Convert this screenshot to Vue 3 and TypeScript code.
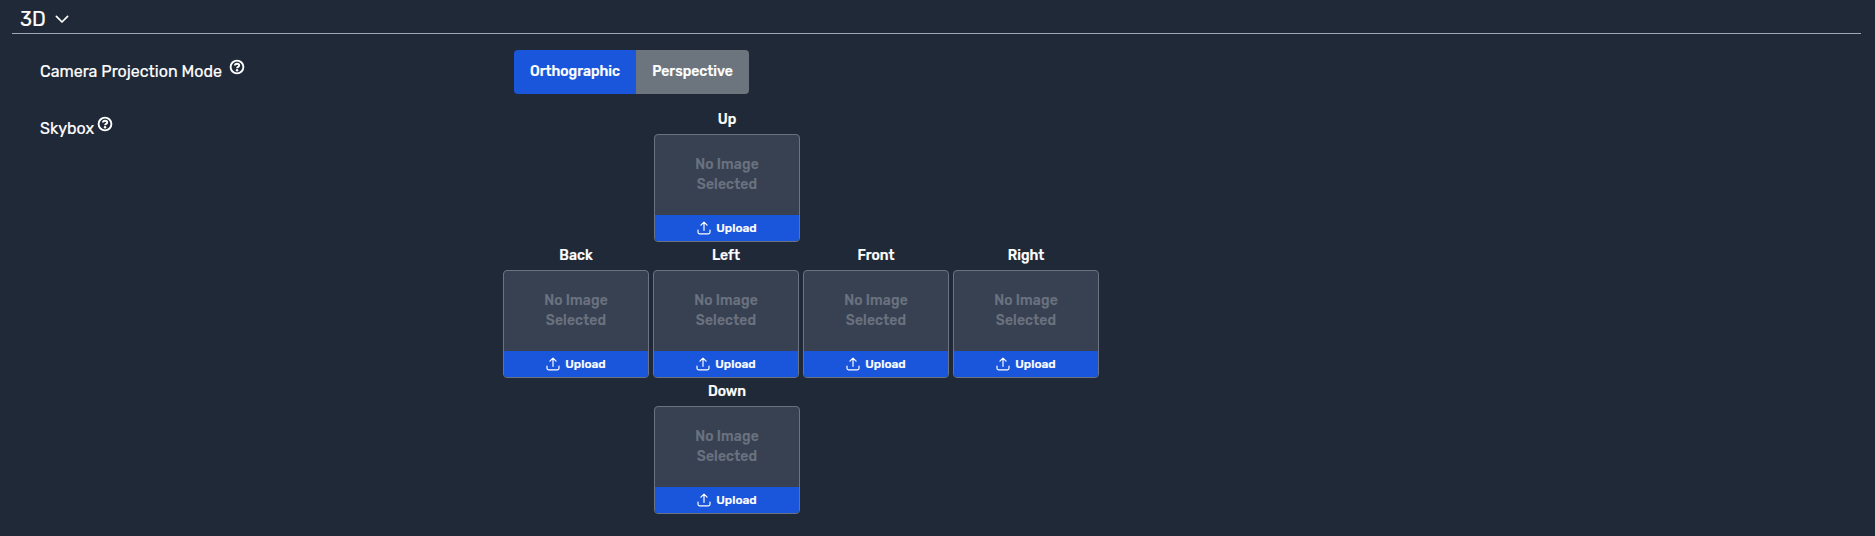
<script setup lang="ts">
import { ref } from 'vue'

const modes = ['Orthographic', 'Perspective']
const mode = ref('Orthographic')
const open = ref(true)
const rows: string[][] = [['Up'], ['Back', 'Left', 'Front', 'Right'], ['Down']]
</script>

<template>
  <main class="panel">
    <header class="section-head" @click="open = !open">
      <span class="section-title">3D</span>
      <svg class="chevron" width="14" height="9" viewBox="0 0 14 9"><path d="M1.400 1.400 7 7l5.600-5.600" /></svg>
    </header>
    <div v-if="open" class="body">
      <div class="setting">
        <div class="name">
          <span class="camera-name">Camera Projection Mode</span>
          <svg class="help wide" width="16" height="16" viewBox="0 0 16 16"><circle cx="8" cy="8" r="6.400" /><path d="M5.900 6.500C6 5.200 6.900 4.700 8.100 4.700c1.200 0 2.100.7 2.100 1.700 0 1.500-2.100 1.400-2.100 2.900" /><circle class="dot" cx="8.050" cy="11.300" r="1.200" /></svg>
        </div>
        <div class="toggle">
          <button v-for="m in modes" :key="m" :class="['mode', m.toLowerCase(), { active: m === mode }]" @click="mode = m">{{ m }}</button>
        </div>
      </div>
      <div class="setting skybox">
        <div class="name">
          <span class="skybox-name">Skybox</span>
          <svg class="help" width="16" height="16" viewBox="0 0 16 16"><circle cx="8" cy="8" r="6.400" /><path d="M5.900 6.500C6 5.200 6.900 4.700 8.100 4.700c1.200 0 2.100.7 2.100 1.700 0 1.500-2.100 1.400-2.100 2.900" /><circle class="dot" cx="8.050" cy="11.300" r="1.200" /></svg>
        </div>
        <div class="faces">
          <div v-for="row in rows" :key="row[0]" :class="['face-row', { single: row.length === 1 }]">
            <section v-for="face in row" :key="face" class="face">
              <h3 class="label">{{ face }}</h3>
              <div class="card">
                <div class="preview"><span>No Image</span><span>Selected</span></div>
                <button class="upload">
                  <svg width="14" height="14" viewBox="0 0 14 14"><path d="M7 9.300V1.200M3.900 4.200 7 1.100l3.100 3.100M1 9v2.300c0 .9.600 1.500 1.500 1.500h9c.9 0 1.500-.6 1.500-1.500V9" /></svg>
                  <span>Upload</span>
                </button>
              </div>
            </section>
          </div>
        </div>
      </div>
    </div>
  </main>
</template>

<style>
body { margin: 0; background: #202937; }
</style>

<style scoped>
.panel { box-sizing: border-box; height: 536px; padding: 0 14px 0 12px; background: #202937; color: #fff; font-family: Rubik, Roboto, sans-serif; overflow: hidden; -webkit-text-stroke: .2px currentColor; }
.section-head { box-sizing: border-box; height: 34px; padding: 5px 0 0 8px; display: flex; border-bottom: 1px solid #9ca9b4; cursor: pointer; }
.section-title { width: 35px; font-size: 20px; line-height: 28px; }
.chevron { margin-top: 10px; fill: none; stroke: #fff; stroke-width: 1.700; stroke-linecap: round; stroke-linejoin: round; }
.body { padding-top: 16px; }
.setting { display: flex; height: 44px; padding-left: 28px; }
.name { width: 474px; display: flex; align-items: flex-start; font-size: 16px; line-height: 24px; white-space: nowrap; }
.name span { margin-top: 10px; }
.camera-name { width: 182px; }
.skybox-name { width: 54px; }
.help { margin: 9px 0 0 3px; fill: none; stroke: #fff; stroke-width: 1.900; }
.help.wide { margin-left: 7px; }
.help .dot { fill: #fff; stroke: none; }
.toggle { display: flex; width: 235px; height: 44px; border-radius: 4px; overflow: hidden; }
button { border: 0; padding: 0; color: #fff; font-family: inherit; cursor: pointer; }
.mode { width: 113px; background: #6c757d; font-size: 14px; line-height: 20px; font-weight: 500; }
.mode.orthographic { width: 122px; }
.mode.active { background: #1a56db; }
.setting.skybox { height: auto; padding-top: 12px; }
.skybox .name { width: 463px; }
.skybox .help { margin-top: 10px; }
.skybox .name span { margin-top: 11px; }
.face-row { display: flex; gap: 4px; }
.face-row.single { padding-left: 151px; }
.face { width: 146px; height: 136px; }
.label { height: 28px; margin: 0; text-align: center; font-size: 14px; line-height: 27px; font-weight: 500; }
.card { box-sizing: border-box; height: 108px; border: 1px solid #6b7280; border-radius: 4px; background: #374151; overflow: hidden; }
.preview { height: 80px; display: flex; flex-direction: column; align-items: center; justify-content: center; color: #6b7280; font-size: 14px; line-height: 20px; font-weight: 500; letter-spacing: .1px; }
.upload { width: 100%; height: 26px; display: flex; align-items: center; justify-content: center; gap: 5px; background: #1a56db; font-size: 12px; line-height: 16px; font-weight: 500; }
.upload svg { fill: none; stroke: #fff; stroke-width: 1.200; stroke-linecap: round; stroke-linejoin: round; }
</style>
